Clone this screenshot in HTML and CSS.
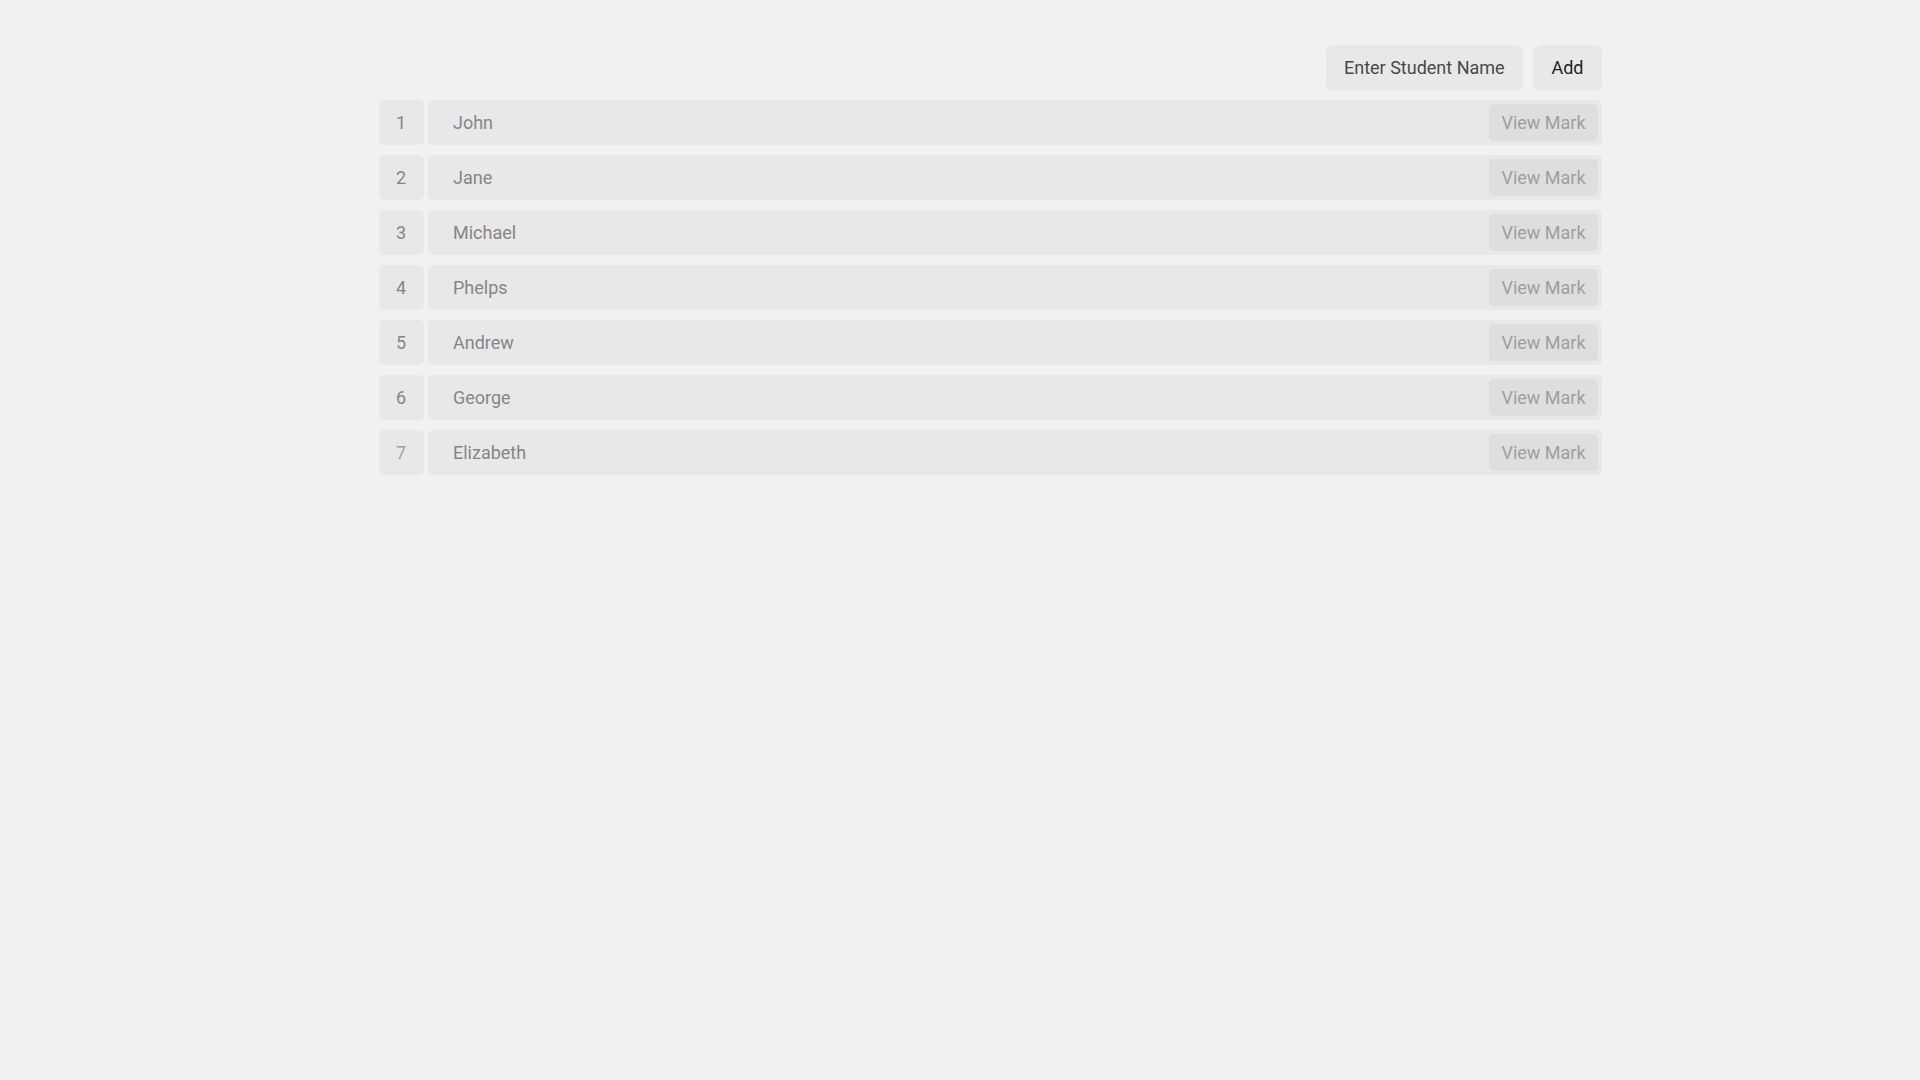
FILE: index.html
```html
<!DOCTYPE html>
<html lang="en">
<head>
  <meta charset="utf-8">
  <meta name="viewport" content="width=device-width, initial-scale=1">
  <title>Students</title>
  <link rel="stylesheet" href="styles.css">
</head>
<body>
  <main class="page">
    <div class="content">
      <form class="add-form">
        <input class="name-input" type="text" placeholder="Enter Student Name" aria-label="Student name">
        <button class="add-button" type="button">Add</button>
      </form>
      <ol class="students">
        <li class="student"><span class="number">1</span><div class="card"><span class="name">John</span><button class="view-button" type="button">View Mark</button></div></li>
        <li class="student"><span class="number">2</span><div class="card"><span class="name">Jane</span><button class="view-button" type="button">View Mark</button></div></li>
        <li class="student"><span class="number">3</span><div class="card"><span class="name">Michael</span><button class="view-button" type="button">View Mark</button></div></li>
        <li class="student"><span class="number">4</span><div class="card"><span class="name">Phelps</span><button class="view-button" type="button">View Mark</button></div></li>
        <li class="student"><span class="number">5</span><div class="card"><span class="name">Andrew</span><button class="view-button" type="button">View Mark</button></div></li>
        <li class="student"><span class="number">6</span><div class="card"><span class="name">George</span><button class="view-button" type="button">View Mark</button></div></li>
        <li class="student"><span class="number number-last">7</span><div class="card"><span class="name">Elizabeth</span><button class="view-button" type="button">View Mark</button></div></li>
      </ol>
    </div>
  </main>
</body>
</html>
```
FILE: styles.css
```css
* {
  box-sizing: border-box;
}

body {
  margin: 0;
  background: #f1f1f1;
  color: #868686;
  font-family: Roboto, "Liberation Sans", sans-serif;
  font-size: 18px;
  line-height: 21px;
}

.page {
  display: grid;
  grid-template-columns: 379fr 1223fr 318fr;
  padding: 45px 0;
}

.content {
  grid-column: 2;
  display: flex;
  flex-direction: column;
  gap: 10px;
}

.add-form {
  display: flex;
  justify-content: flex-end;
  gap: 10px;
}

.name-input,
.add-button,
.view-button {
  border: 0;
  font: inherit;
}

.name-input,
.add-button {
  height: 45px;
  padding: 0 18px;
  border-radius: 7px;
  background: #e8e8e8;
  color: #222;
}

.name-input {
  width: 197px;
}

.name-input::placeholder {
  color: #484848;
  opacity: 1;
}

.add-button {
  width: 69px;
}

.students {
  display: flex;
  flex-direction: column;
  gap: 10px;
  margin: 0;
  padding: 0;
  list-style: none;
}

.student {
  display: flex;
  gap: 4px;
}

.number,
.card {
  display: flex;
  align-items: center;
  height: 45px;
  border-radius: 5px;
  background: #e8e8e8;
}

.number {
  width: 45px;
  padding-left: 17px;
}

.number-last {
  color: #a2a2a2;
}

.card {
  flex: 1;
  justify-content: space-between;
  padding: 4px 4px 4px 25px;
}

.view-button {
  width: 109px;
  height: 37px;
  padding: 0;
  border-radius: 5px;
  background: #dedede;
  color: #9e9e9e;
}
```
